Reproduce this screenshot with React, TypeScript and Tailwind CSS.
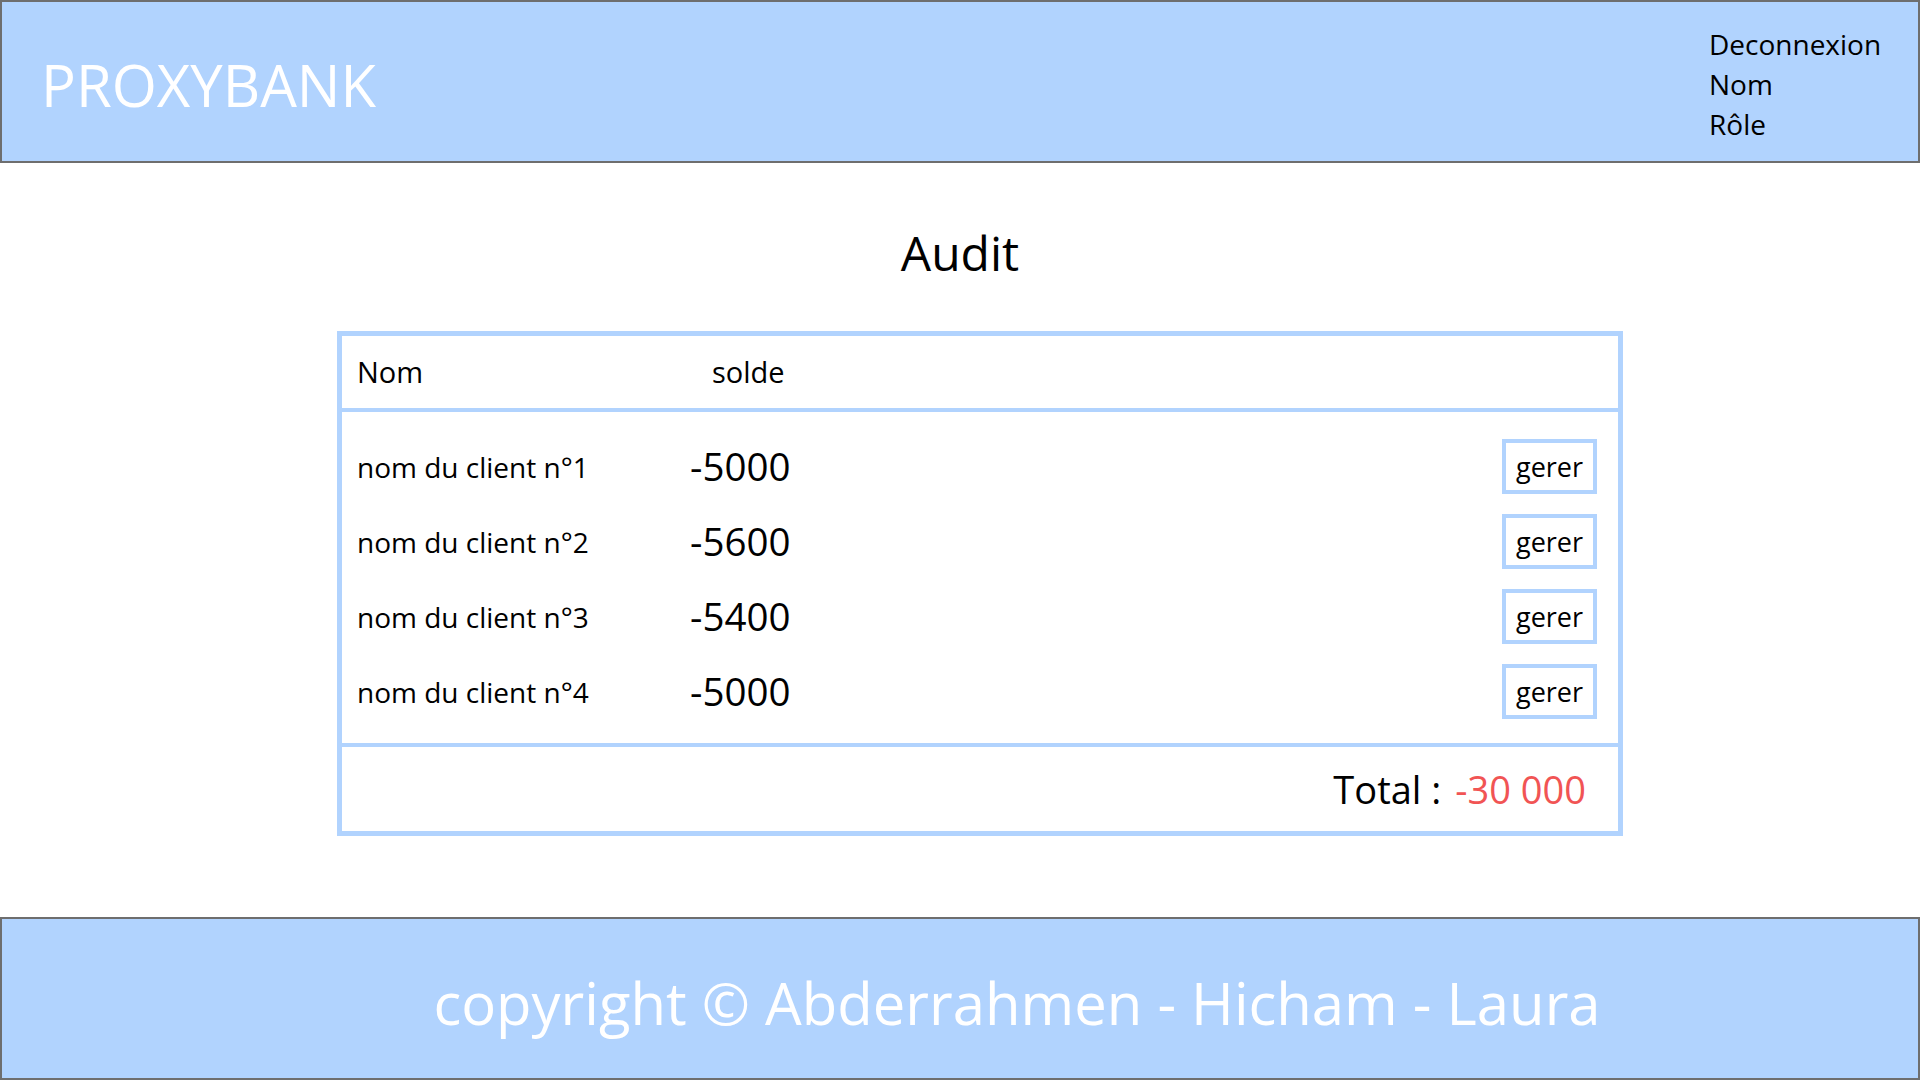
import React from 'react'

const clients = [
  { nom: 'nom du client n°1', solde: '-5000' },
  { nom: 'nom du client n°2', solde: '-5600' },
  { nom: 'nom du client n°3', solde: '-5400' },
  { nom: 'nom du client n°4', solde: '-5000' },
]

export default function App() {
  return (
    <div className="flex min-h-screen w-full flex-col bg-white text-black" style={{ fontFamily: '"Open Sans", "Noto Sans", sans-serif' }}>
      {/* Header */}
      <header className="flex h-[163px] items-center justify-between border-2 border-[#6e6e6e] bg-[#b1d3fe]">
        <div className="pl-[39px] pt-[6px] text-[58px] leading-none text-white">PROXYBANK</div>
        <nav className="flex w-[209px] flex-col self-start pt-[22px] text-[28px] leading-[40px]">
          <span>Deconnexion</span>
          <span>Nom</span>
          <span>Rôle</span>
        </nav>
      </header>

      {/* Main */}
      <main className="flex flex-1 flex-col">
        <h1 className="mt-[60px] self-center text-[48px] leading-[60px]">Audit</h1>

        <div className="mt-[48px] mb-[74px] ml-[337px] flex w-[1286px] flex-col border-[5px] border-[#b1d3fe]">
          <div className="flex h-[76px] items-center border-b-4 border-[#b1d3fe] pl-[15px] text-[29px]">
            <span className="w-[355px]">Nom</span>
            <span>solde</span>
          </div>

          <div className="flex flex-col pt-[17px] pb-[14px]">
            {clients.map((c) => (
              <div key={c.nom} className="flex h-[75px] items-center pl-[15px] pr-[21px]">
                <span className="w-[333px] text-[28px]">{c.nom}</span>
                <span className="text-[38.5px]">{c.solde}</span>
                <button className="ml-auto h-[55px] w-[95px] border-4 border-[#b1d3fe] text-[27px] leading-none">
                  gerer
                </button>
              </div>
            ))}
          </div>

          <div className="flex h-[88px] items-center justify-end border-t-4 border-[#b1d3fe] pr-[32px] text-[38px]">
            <span>Total :</span>
            <span className="ml-[14px] text-[#f15454]">-30 000</span>
          </div>
        </div>
      </main>

      {/* Footer */}
      <footer className="flex h-[163px] items-center justify-center border-2 border-[#6e6e6e] bg-[#b1d3fe] pl-[114px] pt-[8px]">
        <span className="text-[58px] text-white">copyright © Abderrahmen - Hicham - Laura</span>
      </footer>
    </div>
  )
}
